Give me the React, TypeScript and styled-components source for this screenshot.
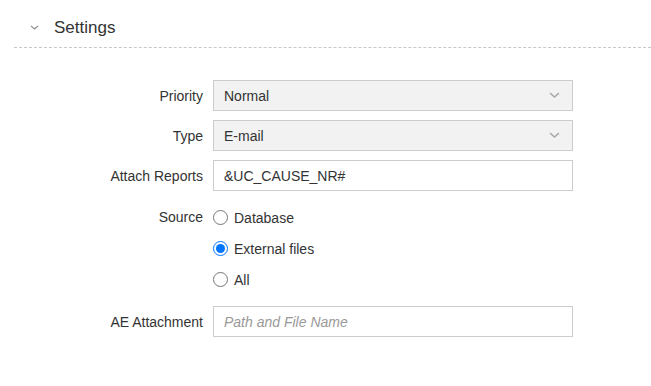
import React from "react";
import styled, { createGlobalStyle } from "styled-components";

const Global = createGlobalStyle`
  body {
    margin: 0;
    background: #ffffff;
    font-family: "Liberation Sans", Arial, sans-serif;
    color: #333333;
  }
`;

const Page = styled.div`
  width: 651px;
  height: 386px;
  padding-left: 14px;
  box-sizing: border-box;
`;

const Header = styled.div`
  display: flex;
  align-items: center;
  gap: 15px;
  height: 48px;
  padding: 10px 0 0 16px;
  border-bottom: 1px dashed #c8c8c8;
  box-sizing: border-box;
  padding-bottom: 2px;
`;

const Title = styled.span`
  font-size: 17px;
  color: #333;
`;

const Form = styled.div`
  display: grid;
  grid-template-columns: 189px 360px;
  column-gap: 10px;
  row-gap: 9px;
  padding-top: 32px;
`;

const Label = styled.div<{ $top?: boolean }>`
  font-size: 14px;
  color: #333;
  text-align: right;
  display: flex;
  justify-content: flex-end;
  align-items: ${(p) => (p.$top ? "flex-start" : "center")};
  padding-top: ${(p) => (p.$top ? "9px" : "0")};
  height: 31px;
  box-sizing: border-box;
`;

const Box = styled.div<{ $select?: boolean; $placeholder?: boolean }>`
  height: 31px;
  box-sizing: border-box;
  border: 1px solid #cccccc;
  background: ${(p) => (p.$select ? "#f2f2f2" : "#ffffff")};
  display: flex;
  align-items: center;
  justify-content: space-between;
  padding: 0 12px 0 10px;
  font-size: 14px;
  color: ${(p) => (p.$placeholder ? "#999999" : "#333333")};
  font-style: ${(p) => (p.$placeholder ? "italic" : "normal")};
`;

const Radios = styled.div`
  display: flex;
  flex-direction: column;
  padding-top: 2px;
  padding-bottom: 2px;
`;

const RadioRow = styled.label`
  display: flex;
  align-items: center;
  gap: 6px;
  height: 31px;
  font-size: 14px;
  color: #333;

  input {
    width: 15px;
    height: 15px;
    margin: 0;
    accent-color: #0075ff;
  }
`;

const Chevron = ({ color, size }: { color: string; size: number }) => (
  <svg width={size} height={size * 0.6} viewBox="0 0 10 6">
    <path d="M1 1 L5 4.5 L9 1" fill="none" stroke={color} strokeWidth="1.3" />
  </svg>
);

export default function App() {
  const [source, setSource] = React.useState("external");
  return (
    <>
      <Global />
      <Page>
        <Header>
          <Chevron color="#8a8a8a" size={9} />
          <Title>Settings</Title>
        </Header>
        <Form>
          <Label>Priority</Label>
          <Box $select>
            Normal
            <Chevron color="#a8a8a8" size={11} />
          </Box>
          <Label>Type</Label>
          <Box $select>
            E-mail
            <Chevron color="#a8a8a8" size={11} />
          </Box>
          <Label>Attach Reports</Label>
          <Box>&amp;UC_CAUSE_NR#</Box>
          <Label $top>Source</Label>
          <Radios>
            {[
              ["db", "Database"],
              ["external", "External files"],
              ["all", "All"],
            ].map(([v, t]) => (
              <RadioRow key={v}>
                <input
                  type="radio"
                  name="source"
                  checked={source === v}
                  onChange={() => setSource(v)}
                />
                {t}
              </RadioRow>
            ))}
          </Radios>
          <Label>AE Attachment</Label>
          <Box $placeholder>Path and File Name</Box>
        </Form>
      </Page>
    </>
  );
}
